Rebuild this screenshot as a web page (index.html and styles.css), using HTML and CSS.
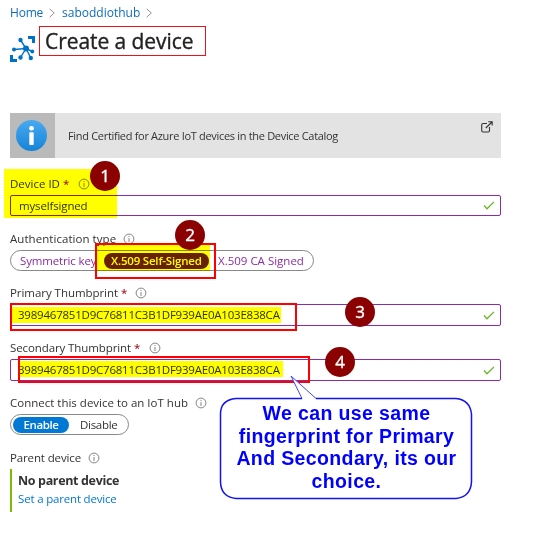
FILE: index.html
```html
<!DOCTYPE html>
<html lang="en">
<head>
<meta charset="utf-8">
<title>Create a device</title>
<link rel="stylesheet" href="styles.css">
</head>
<body>
<svg class="defs" width="0" height="0">
  <symbol id="info" viewBox="0 0 12 12"><circle cx="6" cy="6" r="4.9" fill="none" stroke="#777" stroke-width=".9"/><path d="M6 5v4M6 3v1" stroke="#777" stroke-width=".9"/></symbol>
  <symbol id="check" viewBox="0 0 12 9"><path d="M1 4.5L4 7.7L11 .9" fill="none" stroke="#6bb529" stroke-width="1.3"/></symbol>
  <symbol id="chevron" viewBox="0 0 6 10"><path d="M.6 .8L5.3 5L.6 9.2" fill="none" stroke="#888" stroke-width=".9"/></symbol>
</svg>
<nav class="crumbs">
  <a class="home">Home</a><svg width="6" height="10"><use href="#chevron"/></svg>
  <a class="hub">saboddiothub</a><svg width="6" height="10"><use href="#chevron"/></svg>
</nav>
<header class="heading">
  <svg class="logo" width="26" height="27" viewBox="0 0 26 27">
    <g fill="#0072c6"><path d="M18 0h7v7h-3V3h-4zM0 19h3v4h4v3H0z"/><circle cx="10.5" cy="4" r="2.2"/><circle cx="4" cy="13.500" r="2"/><circle cx="16" cy="12.500" r="3"/><circle cx="22.3" cy="15.5" r="1.900"/><circle cx="10.500" cy="21.500" r="2.2"/><circle cx="20.800" cy="22" r="2.200"/></g>
    <path d="M10.5 4L16 12.500L10.5 21.500M4 13.500L16 12.500L22.3 15.5M16 12.500L20.800 22" fill="none" stroke="#0072c6" stroke-width="1.400"/>
  </svg>
  <h1><span>Create a device</span></h1>
</header>
<section class="banner">
  <div class="tile">
    <svg width="32" height="32" viewBox="0 0 32 32"><defs><linearGradient id="blue" x2="0" y2="1"><stop stop-color="#49a9ef"/><stop offset="1" stop-color="#1684d8"/></linearGradient></defs><circle cx="16.500" cy="16.500" r="15.500" fill="url(#blue)"/><circle cx="16.500" cy="9.300" r="2.400" fill="#fff"/><rect x="14.300" y="13.300" width="4.400" height="12.700" rx=".8" fill="#fff"/></svg>
  </div>
  <p>Find Certified for Azure IoT devices in the Device Catalog</p>
  <svg class="external" width="12" height="12" viewBox="0 0 12 12"><path d="M6 2.5H2.2Q.7 2.5 .7 4v5.5Q.7 11 2.2 11h5Q8.500 11 8.500 9.500V6M4.800 7L11 1M7.300 .8H11.200V4.500" fill="none" stroke="#333" stroke-width="1.1"/></svg>
</section>
<form>
  <div class="field device">
    <label><span class="l1">Device ID <b>*</b></span><svg width="12" height="12"><use href="#info"/></svg></label>
    <div class="input"><span class="v1">myselfsigned</span><svg width="12" height="9"><use href="#check"/></svg></div>
  </div>
  <div class="field auth">
    <label><span class="l2">Authentication type</span><svg width="12" height="12"><use href="#info"/></svg></label>
    <div class="pill auth-pill"><span class="symmetric">Symmetric key</span><span class="selected">X.509 Self-Signed</span><span class="ca">X.509 CA Signed</span></div>
  </div>
  <div class="field primary">
    <label><span class="l3">Primary Thumbprint <b>*</b></span><svg width="12" height="12"><use href="#info"/></svg></label>
    <div class="input"><span class="hash">3989467851D9C76811C3B1DF939AE0A103E838CA</span><svg width="12" height="9"><use href="#check"/></svg></div>
  </div>
  <div class="field secondary">
    <label><span class="l4">Secondary Thumbprint <b>*</b></span><svg width="12" height="12"><use href="#info"/></svg></label>
    <div class="input"><span class="hash">3989467851D9C76811C3B1DF939AE0A103E838CA</span><svg width="12" height="9"><use href="#check"/></svg></div>
  </div>
  <div class="field connect">
    <label><span class="l5">Connect this device to an IoT hub</span><svg width="12" height="12"><use href="#info"/></svg></label>
    <div class="pill hub-pill"><span class="enable">Enable</span><span class="disable">Disable</span></div>
  </div>
  <div class="field parent">
    <label><span class="l6">Parent device</span><svg width="12" height="12"><use href="#info"/></svg></label>
    <div class="parent-box"><strong>No parent device</strong><a>Set a parent device</a></div>
  </div>
</form>
<div class="mark m1"></div><div class="mark m2"></div><div class="mark m3"></div><div class="mark m4"></div>
<div class="frame f2"></div><div class="frame f3"></div><div class="frame f4"></div>
<div class="num n1">1</div><div class="num n2">2</div><div class="num n3">3</div><div class="num n4">4</div>
<div class="callout">
  <svg width="256" height="128" viewBox="0 0 256 128"><path d="M83 24.500H17Q1.500 26 1.500 40V108Q2 123 17 124.500H237Q251.500 123 252.500 108V40Q251 26 237 24.500H97L72 2Z" fill="#fff"/><path d="M83 24.500H17Q1.500 26 1.500 40V108Q2 123 17 124.500H237Q251.500 123 252.500 108V40Q251 26 237 24.500H97" fill="none" stroke="#1212f2" stroke-width="1.500"/><path d="M83 24.500L72 2L97 24.500" fill="none" stroke="#4444f5" stroke-width="1"/></svg>
  <p>We can use same<br>fingerprint for Primary<br>And Secondary, its our<br>choice.</p>
</div>
</body>
</html>
```
FILE: styles.css
```css
* { box-sizing: border-box; }
body { margin: 0; position: relative; width: 533px; height: 545px; overflow: hidden; padding: 4px 32px 0 10px; background: #fff; color: #333; font: 11.5px/16px "Open Sans", "Noto Sans", sans-serif; white-space: nowrap; }
.defs { position: absolute; }
h1, p { margin: 0; font-weight: 400; }
.crumbs { height: 18px; display: flex; align-items: center; gap: 7px; font-size: 12px; color: #0f6cbd; }
.home { letter-spacing: -.2px; width: 33px; }
.hub { width: 78px; }
.crumbs a { margin-right: -1px; }
.heading { display: flex; margin-top: 4px; height: 37px; }
.logo { margin-top: 10px; }
h1 { width: 167px; height: 30px; margin-left: 3px; border: 1px solid #e8131b; padding-left: 5px; font-size: 21px; line-height: 28px; letter-spacing: -.07px; color: #222; -webkit-text-stroke: .35px #222; }
.banner { margin-top: 50px; height: 45px; background: #e3e3e3; display: flex; align-items: center; font-size: 11px; }
.tile { width: 45px; height: 45px; background: #bababa; padding: 6px 5px; }
.banner p { margin-left: 13px; flex: 1; letter-spacing: -.31px; }
.external { align-self: flex-start; margin: 8px 8px 0 0; }
.field { height: 55px; }
.auth { height: 54px; }
form { padding-top: 17px; }
.field label { display: flex; align-items: center; height: 18px; gap: 7px; margin-bottom: 2px; }
.l1 { width: 61px; }
.l2 { width: 106px; letter-spacing: .05px; }
.l3 { width: 118px; letter-spacing: -.05px; }
.l4 { width: 132px; letter-spacing: -.1px; }
.l5 { width: 178px; }
.l6 { width: 71px; letter-spacing: -.13px; }
.field b { color: #a4262c; font-weight: 600; }
.input { height: 22px; border: 1px solid #8a2da5; border-radius: 2px; display: flex; align-items: center; justify-content: space-between; padding: 0 5px 0 7px; }
.device .input { height: 21px; }
.v1 { letter-spacing: -.15px; padding-left: 1px; }
.pill { height: 21px; border: 1px solid #888; border-radius: 11px; display: flex; align-items: center; }
.pill span { line-height: 16px; height: 16px; }
.auth-pill { width: 304px; color: #8a2da5; }
.symmetric { width: 84px; padding-left: 9px; letter-spacing: -.15px; }
.selected { width: 105px; margin-left: 9px; border-radius: 8px; padding-left: 7px; background: #68217a; color: #fff; font-weight: 600; letter-spacing: -.2px; }
.ca { margin-left: 9px; }
.hash { letter-spacing: -.22px; }
.hub-pill { width: 119px; }
.enable { width: 56px; margin-left: 2px; border-radius: 8px; background: #0078d4; color: #fff; font-weight: 600; text-align: center; letter-spacing: -.4px; }
.disable { margin-left: 11px; letter-spacing: -.3px; }
.parent-box { height: 43px; border-left: 2px solid #7fba00; padding: 3px 0 0 6px; display: flex; flex-direction: column; gap: 2px; }
.parent-box strong { font-size: 12.5px; font-weight: 700; line-height: 17px; letter-spacing: -.35px; }
.parent-box a { color: #0078d4; letter-spacing: -.18px; }
.mark { position: absolute; background: #ff0; mix-blend-mode: multiply; }
.m1 { left: 4px; top: 169px; width: 113px; height: 49px; }
.m2 { left: 97px; top: 245px; width: 113px; height: 26px; }
.m3 { left: 12px; top: 307px; width: 269px; height: 16px; }
.m4 { left: 20px; top: 361px; width: 263px; height: 16px; }
.frame { position: absolute; border: 2px solid #f00; }
.f2 { left: 95px; top: 243px; width: 121px; height: 36px; }
.f3 { left: 10px; top: 303px; width: 287px; height: 28px; }
.f4 { left: 18px; top: 356px; width: 292px; height: 27px; }
.num { position: absolute; width: 30px; height: 30px; border-radius: 50%; background: #8b0000; color: #fff; text-align: center; font: 17px/29px "Noto Sans", sans-serif; -webkit-text-stroke: .3px #fff; }
.n1 { left: 90px; top: 161px; }
.n2 { left: 175px; top: 220px; }
.n3 { left: 345px; top: 297px; }
.n4 { left: 325px; top: 347px; }
.callout { position: absolute; left: 219px; top: 374px; width: 256px; height: 128px; }
.callout p { position: absolute; top: 28px; left: 0; width: 255px; text-align: center; color: #00f; font: bold 19.5px/22.67px "Liberation Sans", sans-serif; letter-spacing: .37px; }
```
